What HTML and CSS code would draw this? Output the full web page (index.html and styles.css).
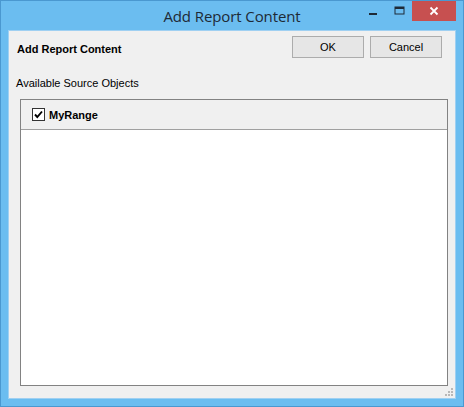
FILE: index.html
```html
<!DOCTYPE html>
<html>
<head>
<meta charset="utf-8">
<link rel="stylesheet" href="styles.css">
</head>
<body>
<div class="window">
  <div class="titlebar">
    <div class="title">Add Report Content</div>
    <div class="caption">
      <div class="cbtn min"><svg width="10" height="10" viewBox="0 0 10 10"><rect x="1" y="7" width="8" height="2" fill="#1e2a36"/></svg></div>
      <div class="cbtn max"><svg width="11" height="10" viewBox="0 0 11 10"><rect x="1" y="1" width="9" height="7" fill="none" stroke="#1e2a36" stroke-width="1"/><rect x="1" y="1" width="9" height="2" fill="#1e2a36"/></svg></div>
      <div class="cbtn close"><svg width="10" height="10" viewBox="0 0 10 10"><path d="M1.5 1.5 L8.5 8.5 M8.5 1.5 L1.5 8.5" stroke="#fff" stroke-width="1.8"/></svg></div>
    </div>
  </div>
  <div class="client">
    <div class="toprow">
      <div class="heading">Add Report Content</div>
      <div class="buttons">
        <button class="btn">OK</button>
        <button class="btn">Cancel</button>
      </div>
    </div>
    <div class="label">Available Source Objects</div>
    <div class="list">
      <div class="item">
        <span class="check"><svg width="11" height="11" viewBox="0 0 11 11"><path d="M2 5.5 L4.3 8 L9 2.5" fill="none" stroke="#000" stroke-width="1.9"/></svg></span>
        <span class="itemtext">MyRange</span>
      </div>
      <div class="listbody"></div>
    </div>
    <div class="grip"><svg width="10" height="10" viewBox="0 0 10 10" fill="#b8b8b8"><rect x="7" y="1" width="2" height="2"/><rect x="4" y="4" width="2" height="2"/><rect x="7" y="4" width="2" height="2"/><rect x="1" y="7" width="2" height="2"/><rect x="4" y="7" width="2" height="2"/><rect x="7" y="7" width="2" height="2"/></svg></div>
  </div>
</div>
</body>
</html>
```
FILE: styles.css
```css
html, body {
  margin: 0;
  padding: 0;
}
body {
  width: 464px;
  height: 407px;
  overflow: hidden;
  background: #6cbcee;
}
.window {
  box-sizing: border-box;
  width: 464px;
  height: 407px;
  background: #6bbdf0;
  border: 1px solid #4a98d0;
  display: flex;
  flex-direction: column;
  position: relative;
}
.titlebar {
  height: 29px;
  flex: none;
  position: relative;
  display: flex;
  justify-content: center;
}
.title {
  font-family: "Open Sans", "Noto Sans", sans-serif;
  font-size: 15px;
  color: #1e2a36;
  line-height: 30px;
  letter-spacing: -0.1px;
}
.caption {
  position: absolute;
  top: 0;
  right: 7px;
  display: flex;
  align-items: flex-start;
}
.cbtn {
  height: 20px;
  display: flex;
  align-items: center;
  justify-content: center;
}
.cbtn.min { width: 26px; }
.cbtn.max { width: 26px; }
.cbtn.close {
  width: 44px;
  background: #c75050;
}
.client {
  flex: 1;
  margin: 0 7px 7px 7px;
  background: #f0f0f0;
  border: 1px solid #9fd0f2;
  display: flex;
  flex-direction: column;
  position: relative;
  font-family: "Liberation Sans", Arial, sans-serif;
  font-size: 11px;
  color: #000;
}
.toprow {
  display: flex;
  justify-content: space-between;
  align-items: flex-start;
  padding: 5px 13px 0 8px;
}
.heading {
  font-weight: bold;
  padding-top: 7px;
}
.buttons {
  display: flex;
  gap: 6px;
}
.btn {
  width: 72px;
  height: 22px;
  box-sizing: border-box;
  border: 1px solid #acacac;
  background: #e6e6e6;
  font-family: "Liberation Sans", Arial, sans-serif;
  font-size: 11px;
  color: #000;
  padding: 0;
  margin: 0;
}
.label {
  padding: 19px 0 0 7px;
  line-height: 13px;
}
.list {
  flex: 1;
  margin: 9px 7px 12px 11px;
  border: 1px solid #828282;
  background: #fff;
  display: flex;
  flex-direction: column;
}
.item {
  height: 29px;
  flex: none;
  background: #f0f0f0;
  border-bottom: 1px solid #a0a0a0;
  display: flex;
  align-items: center;
  padding-left: 11px;
}
.check {
  box-sizing: border-box;
  width: 13px;
  height: 13px;
  border: 1px solid #333;
  background: #fff;
  display: flex;
  align-items: center;
  justify-content: center;
}
.itemtext {
  font-weight: bold;
  margin-left: 4px;
  font-size: 11px;
}
.listbody {
  flex: 1;
}
.grip {
  position: absolute;
  right: 1px;
  bottom: 1px;
  width: 10px;
  height: 10px;
  display: flex;
}
```
